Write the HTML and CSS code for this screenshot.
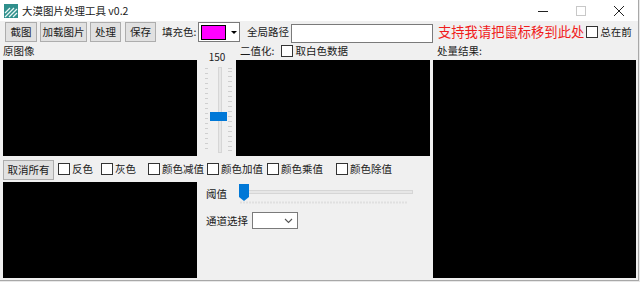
FILE: index.html
```html
<!DOCTYPE html>
<html lang="zh-CN">
<head>
    <meta charset="UTF-8">
    <title>大漠图片处理工具 v0.2</title>
    <link rel="stylesheet" href="styles.css">
</head>
<body>
    <div class="window">
        <div class="titlebar">
            <svg class="app-icon" width="14" height="14" viewBox="0 0 14 14">
                <rect x="0" y="0" width="14" height="14" fill="#2f8f8c"/>
                <path d="M1 9 L6 4 M1 13 L10 4 M5 13 L13 5 M9 13 L13 9" stroke="#e8f6f4" stroke-width="1.3"/>
            </svg>
            <span class="title">大漠图片处理工具 v0.2</span>
            <div class="win-controls">
                <span class="ctl">
                    <svg width="12" height="12" viewBox="0 0 12 12"><path d="M1 6.5 H11" stroke="#222" stroke-width="1"/></svg>
                </span>
                <span class="ctl">
                    <svg width="12" height="12" viewBox="0 0 12 12"><rect x="1.5" y="1.5" width="9" height="9" fill="none" stroke="#c8c8c8"/></svg>
                </span>
                <span class="ctl">
                    <svg width="12" height="12" viewBox="0 0 12 12"><path d="M1 1 L11 11 M11 1 L1 11" stroke="#222" stroke-width="1"/></svg>
                </span>
            </div>
        </div>

        <div class="toolbar">
            <button type="button" class="btn btn-shot">截图</button>
            <button type="button" class="btn btn-load">加载图片</button>
            <button type="button" class="btn btn-run">处理</button>
            <button type="button" class="btn btn-save">保存</button>
            <span class="tool-label fill-label">填充色:</span>
            <div class="color-pick">
                <span class="swatch"></span>
                <span class="pick-arrow"></span>
            </div>
            <span class="tool-label path-label">全局路径</span>
            <input type="text" class="path-input">
            <span class="support">支持我请把鼠标移到此处</span>
            <label class="check top-check"><span class="box"></span>总在前</label>
        </div>

        <div class="main">
            <div class="work">
                <div class="lbl src-label">原图像</div>
                <div class="vslider">
                    <span class="vslider-value">150</span>
                    <svg width="39" height="94" viewBox="0 0 39 94">
                        <g stroke="#cfcfcf" stroke-width="1">
                            <path d="M8 6.5 H11 M8 11.5 H11 M8 16.5 H11 M8 21.5 H11 M8 26.5 H11 M8 31.5 H11 M8 36.5 H11 M8 41.5 H11 M8 46.5 H11 M8 51.5 H11 M8 56.5 H11 M8 61.5 H11 M8 66.5 H11 M8 71.5 H11 M8 76.5 H11 M8 81.5 H11 M8 86.5 H11"/>
                            <path d="M31 6.5 H35 M31 9.5 H35 M31 14.5 H35 M31 19.5 H35 M31 24.5 H35 M31 29.5 H35 M31 34.5 H35 M31 39.5 H35 M31 44.5 H35 M31 49.5 H35 M31 54.5 H35 M31 59.5 H35 M31 64.5 H35 M31 69.5 H35 M31 74.5 H35 M31 79.5 H35 M31 84.5 H35 M31 88.5 H35"/>
                        </g>
                        <rect x="21.5" y="5.5" width="3" height="85" fill="#e7e7e7" stroke="#d6d6d6"/>
                        <rect x="13" y="50" width="17" height="9" fill="#0078d7"/>
                    </svg>
                </div>
                <div class="lbl bin-label">二值化:<label class="check"><span class="box"></span>取白色数据</label></div>

                <div class="canvas"></div>
                <div class="canvas canvas-bin"></div>

                <div class="filters">
                    <button type="button" class="btn btn-clear">取消所有</button>
                    <label class="check f1"><span class="box"></span>反色</label>
                    <label class="check f2"><span class="box"></span>灰色</label>
                    <label class="check f3"><span class="box"></span>颜色减值</label>
                    <label class="check f4"><span class="box"></span>颜色加值</label>
                    <label class="check f5"><span class="box"></span>颜色乘值</label>
                    <label class="check f6"><span class="box"></span>颜色除值</label>
                </div>

                <div class="canvas canvas-low"></div>

                <div class="options">
                    <div class="opt-row">
                        <span class="opt-label">阈值</span>
                        <svg class="hslider" width="180" height="22" viewBox="0 0 180 22">
                            <rect x="11.5" y="7.5" width="165" height="3" fill="#e7e7e7" stroke="#d6d6d6"/>
                            <path d="M4.5 19.5 H171.5" stroke="#d0d0d0" stroke-width="2" stroke-dasharray="1 2"/>
                            <path d="M3 1 H13 V14 L8 18 L3 14 Z" fill="#0078d7"/>
                        </svg>
                    </div>
                    <div class="opt-row">
                        <span class="opt-label">通道选择</span>
                        <div class="select">
                            <svg width="9" height="6" viewBox="0 0 9 6"><path d="M1 1 L4.5 4.5 L8 1" fill="none" stroke="#555" stroke-width="1.1"/></svg>
                        </div>
                    </div>
                </div>
            </div>

            <div class="result">
                <div class="lbl result-label">处量结果:</div>
                <div class="canvas canvas-result"></div>
            </div>
        </div>
    </div>
</body>
</html>
```

FILE: styles.css
```css
body {
    margin: 0;
    background-color: #e8e8e8;
    font-family: "Noto Sans CJK SC", "Liberation Sans", sans-serif;
    font-size: 10.5px;
    color: #1a1a1a;
}

.window {
    width: 638px;
    height: 280px;
    background-color: #f0f0f0;
    border-right: 1px solid #a8a8a8;
    border-bottom: 1px solid #a8a8a8;
    display: flex;
    flex-direction: column;
    overflow: hidden;
}

/* title bar */
.titlebar {
    height: 21px;
    background-color: #fff;
    display: flex;
    align-items: center;
}

.app-icon {
    margin-left: 4px;
}

.title {
    margin-left: 4px;
    font-size: 10.5px;
    line-height: 21px;
}

.win-controls {
    margin-left: auto;
    display: flex;
}

.ctl {
    width: 38px;
    height: 21px;
    display: flex;
    align-items: center;
    justify-content: center;
}

/* toolbar */
.toolbar {
    height: 22px;
    display: flex;
    align-items: center;
    padding-left: 5px;
    white-space: nowrap;
}

.toolbar > * {
    flex-shrink: 0;
}

.btn {
    height: 20px;
    padding: 0;
    border: 1px solid #adadad;
    background-color: #e1e1e1;
    font-family: inherit;
    font-size: 10.5px;
    line-height: 18px;
    color: #1a1a1a;
}

.btn-shot { width: 32px; }
.btn-load { width: 47px; margin-left: 3px; }
.btn-run { width: 31px; margin-left: 3px; }
.btn-save { width: 31px; margin-left: 4px; }

.tool-label {
    line-height: 18px;
}

.fill-label {
    margin-left: 6px;
    width: 36px;
}

.color-pick {
    width: 40px;
    height: 18px;
    border: 1px solid #7a7a7a;
    background-color: #fff;
    display: flex;
    align-items: center;
}

.swatch {
    width: 23px;
    height: 13px;
    margin-left: 2px;
    background-color: #ff00ff;
    border: 1px solid #000;
}

.pick-arrow {
    margin-left: 5px;
    width: 0;
    height: 0;
    border-left: 3px solid transparent;
    border-right: 3px solid transparent;
    border-top: 3px solid #000;
}

.path-label {
    margin-left: 7px;
    width: 44px;
}

.path-input {
    width: 140px;
    height: 17px;
    padding: 0;
    border: 1px solid #7a7a7a;
    background-color: #fff;
    margin-top: 2px;
}

.support {
    margin-left: 5px;
    color: #f01c1c;
    font-size: 13.3px;
    line-height: 18px;
}

.top-check {
    margin-left: 2px;
}

/* checkboxes */
.check {
    display: flex;
    align-items: center;
    line-height: 14px;
    white-space: nowrap;
    flex-shrink: 0;
}

.box {
    width: 10px;
    height: 10px;
    border: 1px solid #333;
    background-color: #fff;
    margin-right: 2px;
}

/* main area */
.main {
    flex: 1;
    display: flex;
    padding-left: 3px;
    gap: 3px;
}

.work {
    width: 427px;
    display: grid;
    grid-template-columns: 194px 39px 194px;
    grid-template-rows: 17px 96px 26px 96px;
}

.lbl {
    line-height: 14px;
    padding-top: 1px;
}

.src-label {
    grid-column: 1;
    grid-row: 1;
}

.bin-label {
    grid-column: 3;
    grid-row: 1;
    display: flex;
    align-items: center;
    gap: 7px;
    margin-left: 4px;
    align-self: start;
}

.vslider {
    grid-column: 2;
    grid-row: 1 / span 2;
    display: flex;
    flex-direction: column;
    align-items: center;
}

.vslider-value {
    font-size: 10px;
    line-height: 10px;
    margin-top: 9px;
    margin-left: 1px;
}

.canvas {
    background-color: #000;
}

.canvas-bin {
    grid-column: 3;
    grid-row: 2;
}

.filters {
    grid-column: 1 / -1;
    grid-row: 3;
    display: flex;
    align-items: center;
}

.btn-clear {
    width: 51px;
    margin-right: 4px;
    margin-top: 2px;
    flex-shrink: 0;
}

.f1 { width: 43px; }
.f2 { width: 47px; }
.f3 { width: 59px; }
.f4 { width: 60px; }
.f5 { width: 69px; }

.canvas-low {
    grid-column: 1;
    grid-row: 4;
}

.options {
    grid-column: 2 / -1;
    grid-row: 4;
    padding-left: 9px;
    display: flex;
    flex-direction: column;
}

.opt-row {
    display: flex;
    align-items: center;
}

.opt-row:first-child {
    height: 24px;
}

.opt-row + .opt-row {
    margin-top: 6px;
}

.opt-label {
    line-height: 14px;
}

.hslider {
    margin-left: 9px;
}

.select {
    width: 40px;
    height: 15px;
    margin-left: 4px;
    border: 1px solid #7a7a7a;
    background-color: #fff;
    display: flex;
    align-items: center;
    justify-content: flex-end;
    padding-right: 4px;
}

/* result column */
.result {
    width: 203px;
    display: flex;
    flex-direction: column;
    padding-bottom: 2px;
}

.result-label {
    height: 16px;
    margin-left: 4px;
}

.canvas-result {
    flex: 1;
}
```
